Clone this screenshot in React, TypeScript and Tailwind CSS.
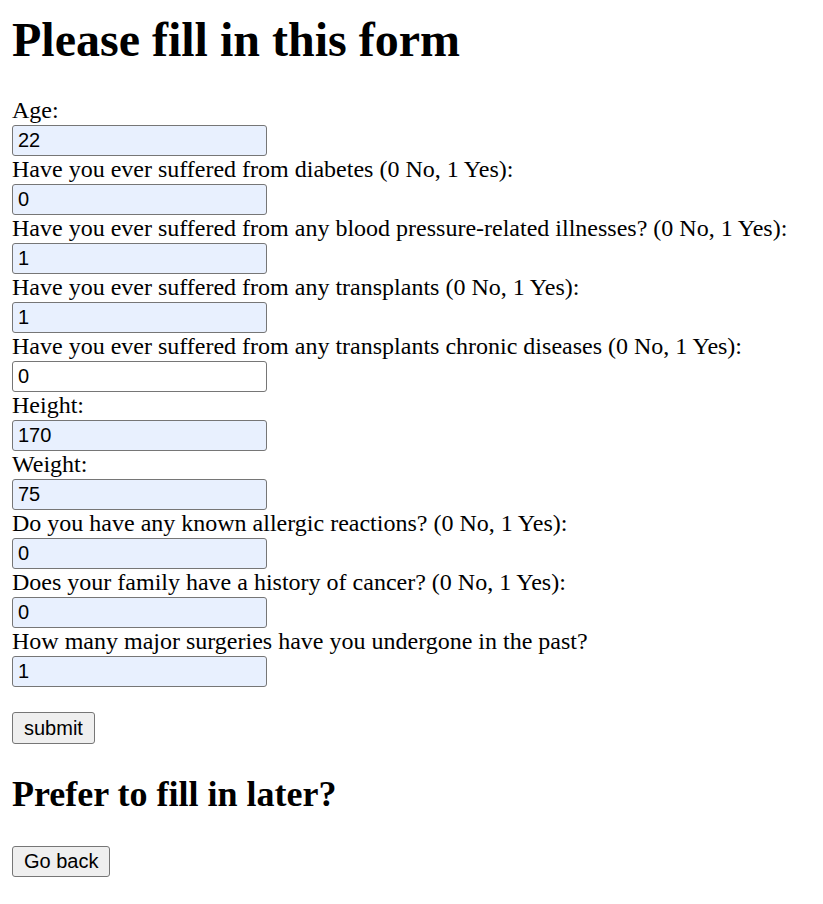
import React from "react";

const fields: { label: string; value: string; filled: boolean }[] = [
  { label: "Age:", value: "22", filled: true },
  { label: "Have you ever suffered from diabetes (0 No, 1 Yes):", value: "0", filled: true },
  { label: "Have you ever suffered from any blood pressure-related illnesses? (0 No, 1 Yes):", value: "1", filled: true },
  { label: "Have you ever suffered from any transplants (0 No, 1 Yes):", value: "1", filled: true },
  { label: "Have you ever suffered from any transplants chronic diseases (0 No, 1 Yes):", value: "0", filled: false },
  { label: "Height:", value: "170", filled: true },
  { label: "Weight:", value: "75", filled: true },
  { label: "Do you have any known allergic reactions? (0 No, 1 Yes):", value: "0", filled: true },
  { label: "Does your family have a history of cancer? (0 No, 1 Yes):", value: "0", filled: true },
  { label: "How many major surgeries have you undergone in the past?", value: "1", filled: true },
];

export default function App() {
  return (
    <div className="min-h-[904px] bg-white px-[12px] pt-[12px] font-['Liberation_Serif','Times_New_Roman',serif] text-black">
      <h1 className="text-[48px] font-bold leading-[55px] mb-[30px]">Please fill in this form</h1>
      <form className="flex flex-col" onSubmit={(e) => e.preventDefault()}>
        {fields.map((f, i) => (
          <div key={i} className="flex flex-col items-start">
            <label className="text-[24px] leading-[27.5px] whitespace-nowrap">{f.label}</label>
            <input
              type="text"
              defaultValue={f.value}
              className={`w-[255px] h-[31.5px] border-[1.5px] border-[#767676] rounded-[3px] px-[5px] text-[20px] font-['Liberation_Sans',Arial,sans-serif] text-black outline-none ${
                f.filled ? "bg-[#e8f0fe]" : "bg-white"
              }`}
            />
          </div>
        ))}
        <div className="mt-[25px]">
          <button
            type="submit"
            className="h-[31.5px] px-[11px] border-[1.5px] border-[#767676] rounded-[3px] bg-[#efefef] text-[20px] font-['Liberation_Sans',Arial,sans-serif] text-black leading-none"
          >
            submit
          </button>
        </div>
      </form>
      <h2 className="text-[36px] font-bold leading-[41px] mt-[30px] mb-[31px]">Prefer to fill in later?</h2>
      <button
        type="button"
        className="h-[31.5px] px-[11px] border-[1.5px] border-[#767676] rounded-[3px] bg-[#efefef] text-[20px] font-['Liberation_Sans',Arial,sans-serif] text-black leading-none"
      >
        Go back
      </button>
    </div>
  );
}
